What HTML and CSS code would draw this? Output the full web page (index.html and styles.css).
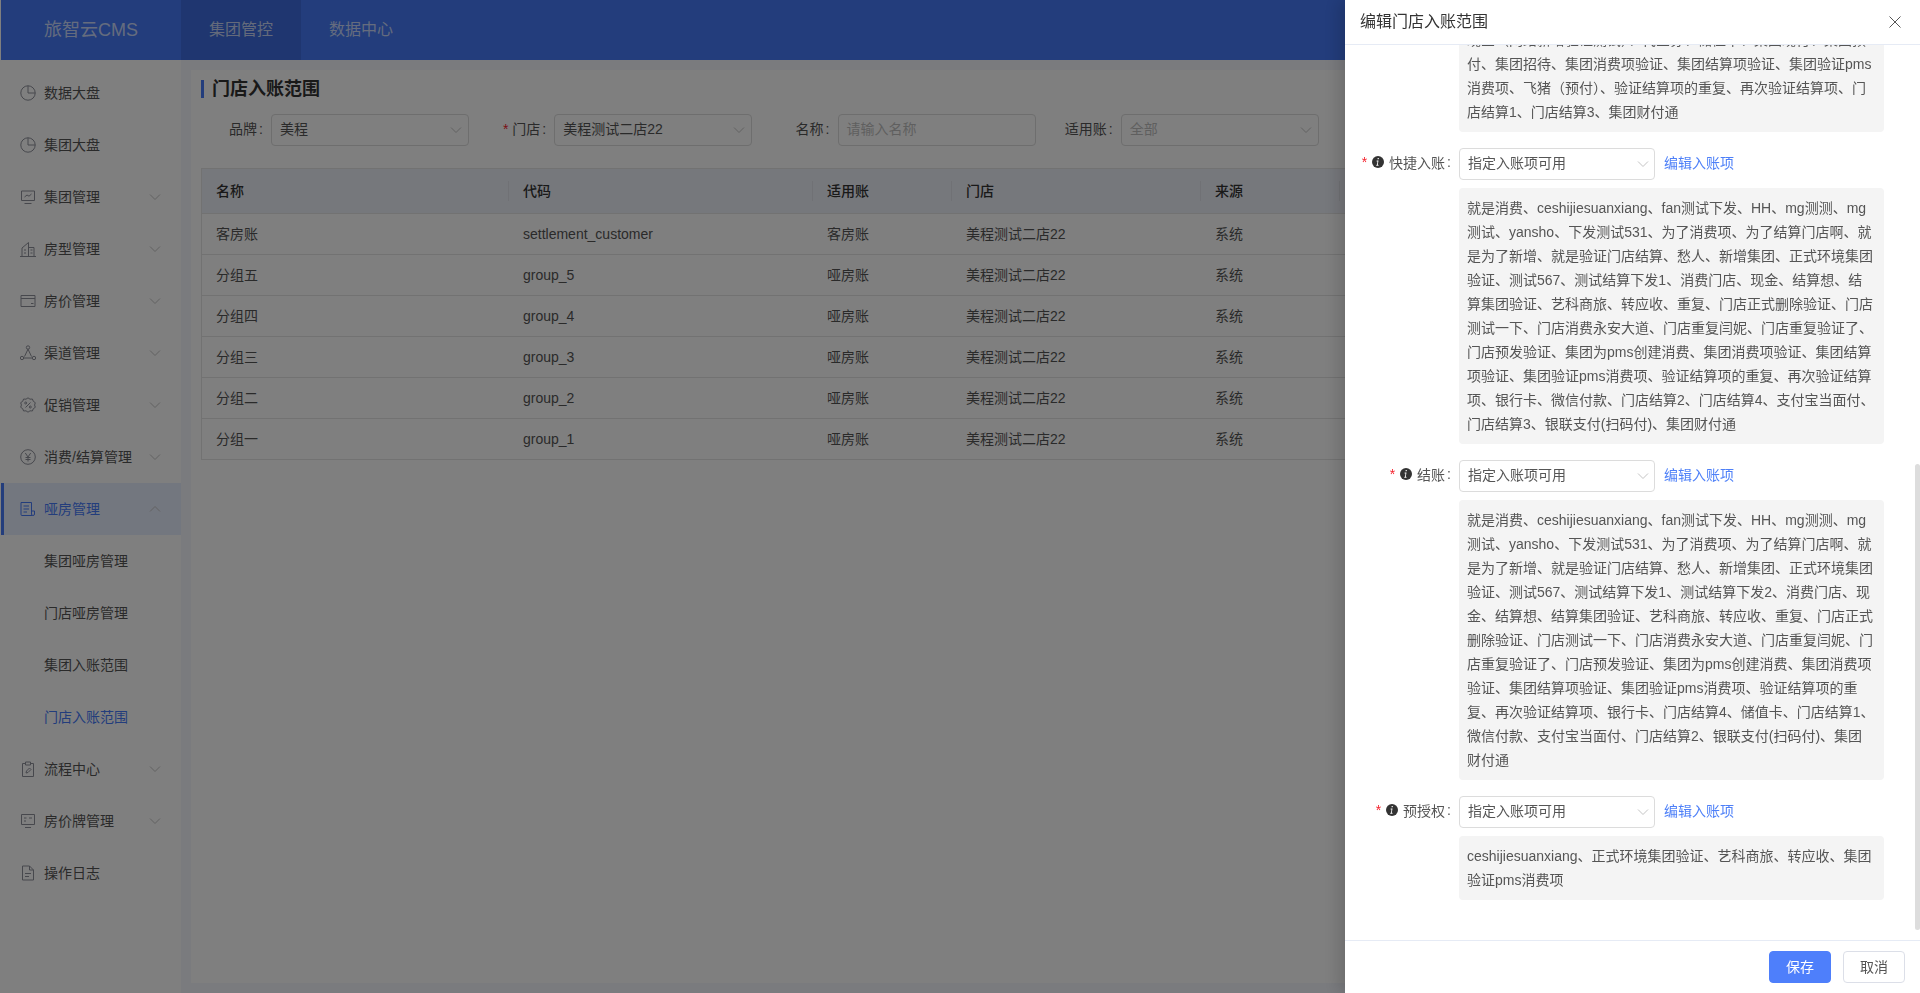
FILE: index.html
```html
<!DOCTYPE html>
<html lang="zh-CN">
<head>
<meta charset="utf-8">
<title>门店入账范围</title>
<link rel="stylesheet" href="styles.css">
</head>
<body>
<svg class="defs" width="0" height="0">
  <symbol id="i-pie" viewBox="0 0 16 16"><circle cx="8" cy="8" r="7.2"/><path d="M8 .8V8h7.2"/></symbol>
  <symbol id="i-monitor" viewBox="0 0 16 16"><path d="M1.500 2h13v9.500h-13z"/><path d="M4.500 14.500h7"/><path d="M4.500 8l2.500-2 2 1.200L11.500 5"/></symbol>
  <symbol id="i-building" viewBox="0 0 16 16"><path d="M0 15.500h16"/><path d="M2 15.500V7L8.500 1.500v14"/><path d="M8.500 6.500h5.500v9"/><path d="M4 9h2M4 12h2M10.500 9h2M10.500 12h2"/></symbol>
  <symbol id="i-wallet" viewBox="0 0 16 16"><path d="M1 2.500h14v11H1z"/><path d="M1 5.500h14"/><path d="M11 10.500h2.500"/></symbol>
  <symbol id="i-nodes" viewBox="0 0 16 16"><circle cx="8" cy="2.500" r="1.700"/><circle cx="2" cy="13" r="1.700"/><circle cx="14" cy="13" r="1.700"/><path d="M8 4.200L4.500 11.500M8 4.200l3.500 7.300M3.700 13h8.600"/></symbol>
  <symbol id="i-badge" viewBox="0 0 16 16"><path d="M8 .8l2 1.400 2.400-.2 .9 2.300 2 1.400-.7 2.300.7 2.300-2 1.400-.9 2.300-2.400-.2-2 1.400-2-1.400-2.400.2-.9-2.300-2-1.400.7-2.300-.7-2.300 2-1.400.9-2.300 2.400.2z"/><path d="M5.500 10.500l5-5"/><circle cx="5.700" cy="6" r="1"/><circle cx="10.300" cy="10" r="1"/></symbol>
  <symbol id="i-yen" viewBox="0 0 16 16"><circle cx="8" cy="8" r="7.300"/><path d="M5.300 4L8 8l2.700-4M8 8v4.500M5.500 8.500h5M5.500 10.500h5"/></symbol>
  <symbol id="i-doc" viewBox="0 0 16 16"><path d="M12 14.500H2a1 1 0 0 1-1-1V1.500h10.500v11.500a1.500 1.500 0 0 0 3 0V10h-3"/><path d="M3.500 5h5.500M3.500 8h5.500M3.500 11h3.500"/></symbol>
  <symbol id="i-clip" viewBox="0 0 16 16"><path d="M5 2.500H2.500v13h11v-13H11"/><path d="M5.500 1h5v3h-5z"/><path d="M6 12l.5-2 3-3 1.500 1.500-3 3z"/></symbol>
  <symbol id="i-board" viewBox="0 0 16 16"><path d="M1.500 1.500h13v10h-13z"/><path d="M5 14.500h6"/><path d="M4 5h2.500M9 5h3M4 8h2"/></symbol>
  <symbol id="i-file" viewBox="0 0 16 16"><path d="M2.500 1h7l4 4v10h-11z"/><path d="M9.500 1v4h4"/><path d="M5 8.500h6M5 11.500h4"/></symbol>
  <symbol id="i-down" viewBox="0 0 12 12"><path d="M1 3.500l5 5 5-5"/></symbol>
  <symbol id="i-info" viewBox="0 0 12 12"><circle cx="6" cy="6" r="6"/><path class="info-i" d="M6.900 2.100l-.2 1.200H5.500l.2-1.200zM6.500 4.500L5.800 8.600c0 .3.100.4.700.4v.7H4.300V9c.5 0 .6-.1.700-.4l.5-3.200H4.600l.1-.9z"/></symbol>
</svg>

<div class="app">
  <header class="topbar">
    <div class="logo">旅智云CMS</div>
    <nav class="tabs">
      <a class="tab tab-active">集团管控</a>
      <a class="tab">数据中心</a>
    </nav>
  </header>

  <div class="main">
    <aside class="sidebar">
      <div class="menu-item"><svg class="ico"><use href="#i-pie"/></svg><span>数据大盘</span></div>
      <div class="menu-item"><svg class="ico"><use href="#i-pie"/></svg><span>集团大盘</span></div>
      <div class="menu-item"><svg class="ico"><use href="#i-monitor"/></svg><span>集团管理</span><svg class="caret"><use href="#i-down"/></svg></div>
      <div class="menu-item"><svg class="ico"><use href="#i-building"/></svg><span>房型管理</span><svg class="caret"><use href="#i-down"/></svg></div>
      <div class="menu-item"><svg class="ico"><use href="#i-wallet"/></svg><span>房价管理</span><svg class="caret"><use href="#i-down"/></svg></div>
      <div class="menu-item"><svg class="ico"><use href="#i-nodes"/></svg><span>渠道管理</span><svg class="caret"><use href="#i-down"/></svg></div>
      <div class="menu-item"><svg class="ico"><use href="#i-badge"/></svg><span>促销管理</span><svg class="caret"><use href="#i-down"/></svg></div>
      <div class="menu-item"><svg class="ico"><use href="#i-yen"/></svg><span>消费/结算管理</span><svg class="caret"><use href="#i-down"/></svg></div>
      <div class="menu-item menu-open"><svg class="ico"><use href="#i-doc"/></svg><span>哑房管理</span><svg class="caret caret-up"><use href="#i-down"/></svg></div>
      <div class="menu-item menu-sub"><span>集团哑房管理</span></div>
      <div class="menu-item menu-sub"><span>门店哑房管理</span></div>
      <div class="menu-item menu-sub"><span>集团入账范围</span></div>
      <div class="menu-item menu-sub menu-sub-active"><span>门店入账范围</span></div>
      <div class="menu-item"><svg class="ico"><use href="#i-clip"/></svg><span>流程中心</span><svg class="caret"><use href="#i-down"/></svg></div>
      <div class="menu-item"><svg class="ico"><use href="#i-board"/></svg><span>房价牌管理</span><svg class="caret"><use href="#i-down"/></svg></div>
      <div class="menu-item"><svg class="ico"><use href="#i-file"/></svg><span>操作日志</span></div>
    </aside>

    <section class="content">
      <div class="card">
        <h1 class="page-title">门店入账范围</h1>
        <div class="filters">
          <div class="filter"><label class="filter-label">品牌</label><div class="select"><span>美程</span><svg class="caret"><use href="#i-down"/></svg></div></div>
          <div class="filter"><label class="filter-label"><i class="star">*</i>门店</label><div class="select"><span>美程测试二店22</span><svg class="caret"><use href="#i-down"/></svg></div></div>
          <div class="filter"><label class="filter-label">名称</label><div class="select"><span class="placeholder">请输入名称</span></div></div>
          <div class="filter"><label class="filter-label">适用账</label><div class="select"><span class="placeholder">全部</span><svg class="caret"><use href="#i-down"/></svg></div></div>
        </div>
        <div class="table">
          <div class="row row-head"><div class="cell">名称</div><div class="cell">代码</div><div class="cell">适用账</div><div class="cell">门店</div><div class="cell">来源</div><div class="cell"></div></div>
          <div class="row"><div class="cell">客房账</div><div class="cell cell-code">settlement_customer</div><div class="cell">客房账</div><div class="cell">美程测试二店22</div><div class="cell">系统</div><div class="cell"></div></div>
          <div class="row"><div class="cell">分组五</div><div class="cell cell-code">group_5</div><div class="cell">哑房账</div><div class="cell">美程测试二店22</div><div class="cell">系统</div><div class="cell"></div></div>
          <div class="row"><div class="cell">分组四</div><div class="cell cell-code">group_4</div><div class="cell">哑房账</div><div class="cell">美程测试二店22</div><div class="cell">系统</div><div class="cell"></div></div>
          <div class="row"><div class="cell">分组三</div><div class="cell cell-code">group_3</div><div class="cell">哑房账</div><div class="cell">美程测试二店22</div><div class="cell">系统</div><div class="cell"></div></div>
          <div class="row"><div class="cell">分组二</div><div class="cell cell-code">group_2</div><div class="cell">哑房账</div><div class="cell">美程测试二店22</div><div class="cell">系统</div><div class="cell"></div></div>
          <div class="row"><div class="cell">分组一</div><div class="cell cell-code">group_1</div><div class="cell">哑房账</div><div class="cell">美程测试二店22</div><div class="cell">系统</div><div class="cell"></div></div>
        </div>
      </div>
    </section>
  </div>
</div>

<div class="mask"></div>

<aside class="drawer">
  <div class="drawer-head">
    <div class="drawer-title">编辑门店入账范围</div>
    <svg class="close" viewBox="0 0 12 12"><path d="M.5 .5l11 11M11.500 .5l-11 11"/></svg>
  </div>
  <div class="drawer-body">
    <div class="form">
      <div class="scope scope-first">现金（网络新增验证测试）、代金券、储值卡、集团现付、集团预<br>付、集团招待、集团消费项验证、集团结算项验证、集团验证pms消费项、飞猪（预付）、验证结算项的重复、再次验证结算项、门店结算1、门店结算3、集团财付通</div>

      <div class="form-row">
        <div class="form-label"><i class="star">*</i><svg class="info"><use href="#i-info"/></svg><span>快捷入账</span></div>
        <div class="select select-form"><span>指定入账项可用</span><svg class="caret"><use href="#i-down"/></svg></div>
        <a class="link">编辑入账项</a>
      </div>
      <div class="scope">就是消费、ceshijiesuanxiang、fan测试下发、HH、mg测测、mg测试、yansho、下发测试531、为了消费项、为了结算门店啊、就是为了新增、就是验证门店结算、愁人、新增集团、正式环境集团验证、测试567、测试结算下发1、消费门店、现金、结算想、结算集团验证、艺科商旅、转应收、重复、门店正式删除验证、门店测试一下、门店消费永安大道、门店重复闫妮、门店重复验证了、门店预发验证、集团为pms创建消费、集团消费项验证、集团结算项验证、集团验证pms消费项、验证结算项的重复、再次验证结算项、银行卡、微信付款、门店结算2、门店结算4、支付宝当面付、门店结算3、银联支付(扫码付)、集团财付通</div>

      <div class="form-row">
        <div class="form-label"><i class="star">*</i><svg class="info"><use href="#i-info"/></svg><span>结账</span></div>
        <div class="select select-form"><span>指定入账项可用</span><svg class="caret"><use href="#i-down"/></svg></div>
        <a class="link">编辑入账项</a>
      </div>
      <div class="scope">就是消费、ceshijiesuanxiang、fan测试下发、HH、mg测测、mg测试、yansho、下发测试531、为了消费项、为了结算门店啊、就是为了新增、就是验证门店结算、愁人、新增集团、正式环境集团验证、测试567、测试结算下发1、测试结算下发2、消费门店、现金、结算想、结算集团验证、艺科商旅、转应收、重复、门店正式删除验证、门店测试一下、门店消费永安大道、门店重复闫妮、门店重复验证了、门店预发验证、集团为pms创建消费、集团消费项验证、集团结算项验证、集团验证pms消费项、验证结算项的重复、再次验证结算项、银行卡、门店结算4、储值卡、门店结算1、微信付款、支付宝当面付、门店结算2、银联支付(扫码付)、集团财付通</div>

      <div class="form-row">
        <div class="form-label"><i class="star">*</i><svg class="info"><use href="#i-info"/></svg><span>预授权</span></div>
        <div class="select select-form"><span>指定入账项可用</span><svg class="caret"><use href="#i-down"/></svg></div>
        <a class="link">编辑入账项</a>
      </div>
      <div class="scope">ceshijiesuanxiang、正式环境集团验证、艺科商旅、转应收、集团验证pms消费项</div>
    </div>
    <div class="scrollbar"></div>
  </div>
  <div class="drawer-foot">
    <button class="btn btn-primary">保存</button>
    <button class="btn">取消</button>
  </div>
</aside>
</body>
</html>
```

FILE: styles.css
```css
* { box-sizing: border-box; }
html, body { margin: 0; padding: 0; height: 100%; overflow: hidden; }
body {
  font-family: "Liberation Sans", "Noto Sans CJK SC", sans-serif;
  font-size: 14px;
  color: #555;
  background: #fff;
}
.defs { position: absolute; }
svg { fill: none; stroke: currentColor; stroke-width: 1; }

.app { height: 993px; display: flex; flex-direction: column; padding-left: 1px; }

.topbar { height: 60px; flex: none; display: flex; background: #467af8; color: #fff; }
.logo { width: 180px; padding-left: 43px; font-size: 18px; line-height: 60px; color: rgba(255,255,255,.72); }
.tabs { display: flex; }
.tab { width: 120px; text-align: center; font-size: 16px; line-height: 60px; color: rgba(255,255,255,.72); }
.tab-active { background: #3e6de0; }

.main { flex: 1; display: flex; min-height: 0; }

.sidebar { width: 180px; flex: none; padding-top: 7px; background: #fff; }
.menu-item { height: 52px; display: flex; align-items: center; padding: 0 20px 0 19px; color: #555; }
.menu-item span { flex: 1; margin-left: 8px; padding-bottom: 2px; white-space: nowrap; }
.ico { width: 16px; height: 16px; flex: none; color: #8e909a; }
.caret { width: 12px; height: 12px; flex: none; color: #c4c4c4; }
.caret-up { transform: rotate(180deg); }
.menu-open { background: #e7eeff; box-shadow: inset 3px 0 0 #467af8; color: #467af8; }
.menu-open .ico { color: #467af8; }
.menu-sub { padding-left: 43px; }
.menu-sub span { margin-left: 0; }
.menu-sub-active { color: #467af8; }

.content { flex: 1; min-width: 0; padding: 10px; background: #f5f7fc; }
.card { height: 100%; padding: 10px; background: #fff; }
.page-title {
  margin: 0;
  height: 18px;
  padding-left: 8px;
  border-left: 3px solid #467af8;
  font-size: 18px;
  line-height: 18px;
  font-weight: 700;
  color: #333;
}
.filters { display: grid; grid-template-columns: repeat(4, 283.250px); margin: 16px 0 22px -14px; }
.filter { display: flex; align-items: center; }
.filter-label { width: 76px; margin-right: 8px; padding-bottom: 4px; text-align: right; color: #555; white-space: nowrap; }
.filter-label::after { content: ":"; margin-left: 2px; }
.star { font-style: normal; color: #f5222d; margin-right: 4px; font-size: 14px; }

.select {
  width: 198px;
  height: 32px;
  flex: none;
  display: flex;
  align-items: center;
  justify-content: space-between;
  padding: 0 6px 0 8px;
  border: 1px solid #dcdcdc;
  border-radius: 4px;
  background: #fff;
  color: #555;
}
.select span { padding-bottom: 4px; }
.placeholder { color: #bfbfbf; }

.table { border: 1px solid #e4e4e4; border-right: 0; border-bottom: 0; }
.row {
  display: grid;
  grid-template-columns: 307px 304px 139px 249px 139px 1fr;
  height: 41px;
  align-items: center;
  border-bottom: 1px solid #e4e4e4;
}
.cell { padding: 0 0 2px 14px; position: relative; white-space: nowrap; }
.cell-code { padding-bottom: 0; }
.row-head { height: 45px; background: #edf0f9; color: #333; font-weight: 500; }
.row-head .cell::after {
  content: "";
  position: absolute;
  right: 0;
  top: 50%;
  height: 20px;
  margin-top: -10px;
  border-right: 1px solid #e0e2ea;
}

.mask { position: fixed; inset: 0; background: rgba(0,0,0,.5); }

.drawer {
  position: fixed;
  top: 0;
  right: 0;
  bottom: 0;
  width: 575px;
  display: flex;
  flex-direction: column;
  background: #fff;
  box-shadow: -6px 0 16px rgba(0,0,0,.16);
}
.drawer-head {
  height: 45px;
  flex: none;
  display: flex;
  align-items: center;
  justify-content: space-between;
  padding: 0 19px 1px 15px;
  border-bottom: 1px solid #e6ebf5;
}
.drawer-title { font-size: 16px; color: #333; padding-bottom: 4px; }
.close { width: 12px; height: 12px; color: #555; }

.drawer-body { flex: 1; min-height: 0; overflow: hidden; position: relative; }
.form { margin-top: -25px; padding: 0 36px 0 16px; }
.scope {
  margin: 8px 0 16px 98px;
  padding: 8px;
  background: #f4f4f4;
  border-radius: 4px;
  line-height: 24px;
  color: #555;
}
.scope-first { margin-top: 0; }
.form-row { display: flex; align-items: center; height: 32px; }
.form-label { width: 90px; margin-right: 8px; padding-bottom: 4px; display: flex; justify-content: flex-end; align-items: center; white-space: nowrap; color: #555; flex: none; }
.form-label::after { content: ":"; margin-left: 2px; }
.form-label .star { margin-right: 5px; }
.info { width: 12px; height: 12px; margin-right: 5px; color: #333; fill: #333; stroke: none; flex: none; }
.info-i { fill: #fff; }
.select-form { width: 196px; padding-right: 5px; }
.link { margin-left: 9px; padding-bottom: 4px; color: #4e80f8; }

.scrollbar {
  position: absolute;
  right: 0;
  top: 419px;
  width: 5px;
  height: 466px;
  border-radius: 3px;
  background: #ddd;
}

.drawer-foot {
  height: 53px;
  flex: none;
  display: flex;
  justify-content: flex-end;
  gap: 12px;
  padding: 10px 15px 0 0;
  border-top: 1px solid #e6ebf5;
}
.btn {
  width: 62px;
  height: 32px;
  border: 1px solid #dcdfe8;
  border-radius: 4px;
  background: #fff;
  color: #555;
  font: inherit;
  padding: 0 0 2px;
}
.btn-primary { background: #4e7ffb; border-color: #4e7ffb; color: #fff; }
```
